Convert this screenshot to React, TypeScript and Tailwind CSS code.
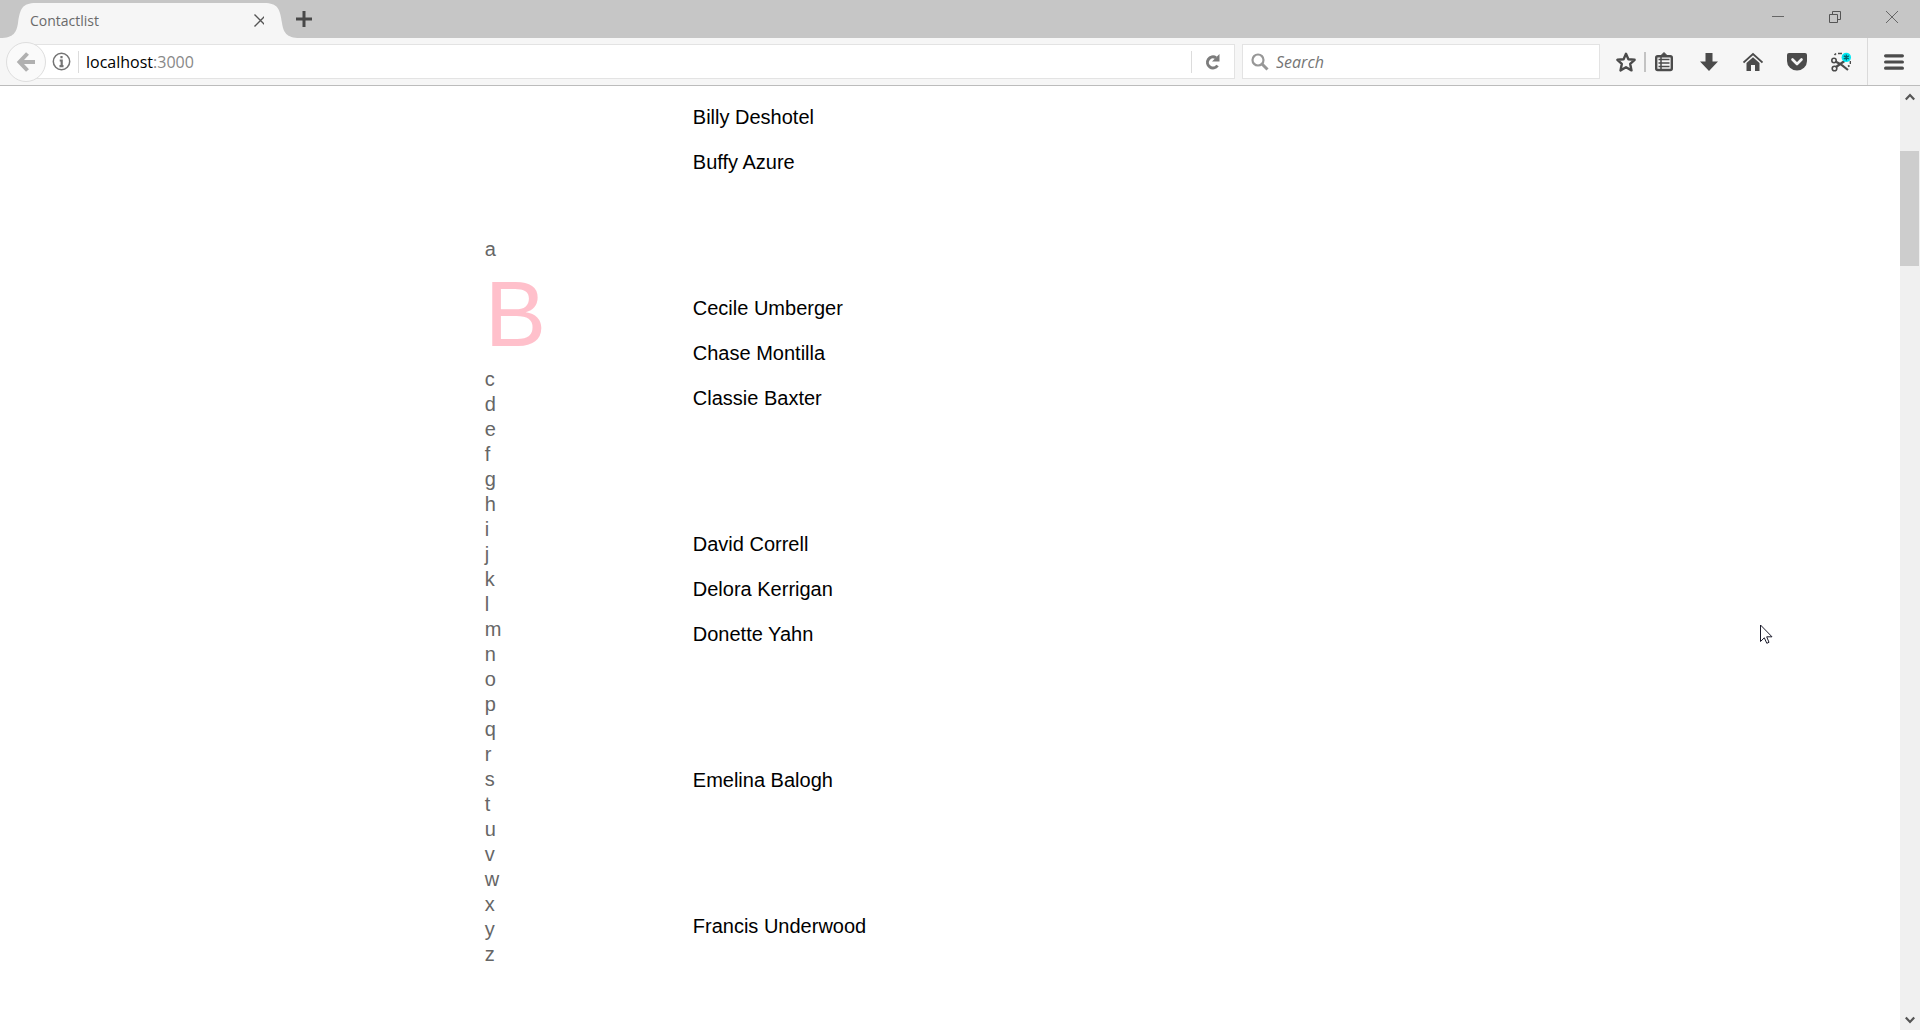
import React from "react";

const groups: string[][] = [
  ["Billy Deshotel", "Buffy Azure"],
  ["Cecile Umberger", "Chase Montilla", "Classie Baxter"],
  ["David Correll", "Delora Kerrigan", "Donette Yahn"],
  ["Emelina Balogh"],
  ["Francis Underwood"],
];

const letters = "abcdefghijklmnopqrstuvwxyz".split("");

function TabStrip() {
  return (
    <div className="flex h-[38px] items-stretch bg-[#c6c6c6]">
      <div className="flex items-end">
        <svg className="h-[38px] w-9" viewBox="0 0 36 38" aria-hidden="true">
          <path d="M0 38C14 38 16.500 32 18 23C20 9 22 3 36 3V38Z" fill="#f6f6f6" />
        </svg>
        <div className="flex h-[35px] w-[228px] items-center bg-[#f6f6f6]">
          <span className="-ml-[6px] text-[14px] leading-5 text-[#6a6a6a]">Contactlist</span>
          <button aria-label="Close tab" className="-mr-1 ml-auto">
            <svg className="size-[15px]" viewBox="0 0 15 15" stroke="#555" strokeWidth="1.4">
              <path d="M1.500 1.500L13.500 13.500M13.500 1.500L1.500 13.500" />
            </svg>
          </button>
        </div>
        <svg className="h-[38px] w-9" viewBox="0 0 36 38" aria-hidden="true">
          <path d="M36 38C22 38 19.500 32 18 23C16 9 14 3 0 3V38Z" fill="#f6f6f6" />
        </svg>
      </div>
      <button aria-label="New tab" className="-ml-1 flex items-center">
        <svg className="size-4" viewBox="0 0 16 16" stroke="#484848" strokeWidth="3">
          <path d="M8 0V16M0 8H16" />
        </svg>
      </button>
      <div className="ml-auto flex items-start gap-[43px] pr-[21px] pt-[10px]">
        <button aria-label="Minimize">
          <svg className="size-[14px]" viewBox="0 0 14 14" stroke="#666">
            <path d="M1 6.500H13" />
          </svg>
        </button>
        <button aria-label="Restore">
          <svg className="size-[14px]" viewBox="0 0 14 14" fill="none" stroke="#555">
            <path d="M1.500 4.500H9.500V12.500H1.500ZM4.500 4.500V1.500H12.500V9.500H9.500" />
          </svg>
        </button>
        <button aria-label="Close window">
          <svg className="size-[14px]" viewBox="0 0 14 14" stroke="#666">
            <path d="M1 1L13 13M13 1L1 13" />
          </svg>
        </button>
      </div>
    </div>
  );
}

function Toolbar() {
  return (
    <div className="flex h-12 items-center border-b border-[#bcbcbc] bg-[#f6f6f6] pl-[6px]">
      <button
        aria-label="Back"
        className="relative z-10 flex size-10 shrink-0 items-center justify-center rounded-full border border-[#dedede] bg-[#fafafa]"
      >
        <svg className="size-5" viewBox="0 0 20 20" fill="none" stroke="#b0b0b0" strokeWidth="4">
          <path d="M11.500 1.500L3.500 10L11.500 18.500M3.500 10H19" />
        </svg>
      </button>
      <div className="-ml-3 flex h-[35px] grow items-center border border-[#e3e3e3] bg-white pl-[17px]">
        <button aria-label="Site information" className="shrink-0">
          <svg className="size-[19px]" viewBox="0 0 19 19" fill="none" stroke="#737373">
            <circle cx="9.500" cy="9.500" r="8.200" strokeWidth="1.500" />
            <path d="M9.500 4V6.300M7.700 8.500H9.700V14M7.500 14.200H11.500" strokeWidth="2.200" />
          </svg>
        </button>
        <div className="ml-[7px] h-[22px] w-px bg-[#dcdcdc]" />
        <div className="relative ml-[7px] grow text-base leading-6">
          <input aria-label="Address" defaultValue="localhost:3000" className="w-full bg-transparent text-transparent caret-black outline-none" />
          <span aria-hidden="true" className="pointer-events-none absolute left-0 top-0 text-black">
            localhost<span className="text-[#888]">:3000</span>
          </span>
        </div>
        <div className="h-[22px] w-px bg-[#dcdcdc]" />
        <button aria-label="Reload" className="flex w-[42px] justify-center">
          <svg className="size-4" viewBox="0 0 16 16" fill="none">
            <path d="M12.500 11.500A5.500 5.500 0 1 1 11 3.800" stroke="#7c7c7c" strokeWidth="3" />
            <path d="M14.500 0V7.500H7Z" fill="#7c7c7c" />
          </svg>
        </button>
      </div>
      <div className="ml-[7px] flex h-[35px] w-[358px] shrink-0 items-center border border-[#e3e3e3] bg-white pl-2">
        <svg className="size-[18px] shrink-0" viewBox="0 0 18 18" fill="none" stroke="#979797" aria-hidden="true">
          <circle cx="7" cy="7" r="5.500" strokeWidth="2.200" />
          <path d="M11 11L16.500 16.500" strokeWidth="3" />
        </svg>
        <input
          aria-label="Search"
          placeholder="Search"
          className="ml-[7px] min-w-0 grow bg-transparent text-base italic leading-6 outline-none placeholder:text-[#757575]"
        />
      </div>
      <div className="ml-4 flex shrink-0 items-center text-[#4b4b4b]">
        <button aria-label="Bookmark this page">
          <svg className="size-5" viewBox="0 0 20 20" fill="none" stroke="currentColor" strokeWidth="2.400" strokeLinejoin="round">
            <path d="M10 1.800L12.400 7.200L18.600 7.800L14.200 11.900L15.500 18.400L10 15.200L4.500 18.400L5.800 11.900L1.400 7.800L7.600 7.200Z" />
          </svg>
        </button>
        <div className="ml-2 h-5 w-[2px] bg-[#c3c3c3]" />
        <button aria-label="Bookmarks list" className="ml-[9px]">
          <svg className="h-5 w-[18px]" viewBox="0 0 18 20" fill="none" stroke="currentColor">
            <path d="M9 .5L5 4.500H13Z" fill="currentColor" />
            <rect x="1.200" y="4.200" width="15.600" height="13.800" rx="1.500" strokeWidth="2.400" />
            <path d="M3.500 7.500H14.500M3.500 11H14.500M3.500 14.500H14.500M6 5V17" strokeWidth="1.500" />
          </svg>
        </button>
        <button aria-label="Downloads" className="ml-[27px]">
          <svg className="size-[18px]" viewBox="0 0 18 18" fill="currentColor">
            <path d="M5.500 0H12.500V8.500H18L9 18L0 8.500H5.500Z" />
          </svg>
        </button>
        <button aria-label="Home" className="ml-[25px]">
          <svg className="size-5" viewBox="0 0 20 20" fill="currentColor">
            <path d="M.5 10.500L10 2L19.500 10.500" fill="none" stroke="currentColor" strokeWidth="1.800" />
            <path d="M10 5.200L16.500 11V19H12V13H8V19H3.500V11Z" />
          </svg>
        </button>
        <button aria-label="Pocket" className="ml-[24px]">
          <svg className="size-5" viewBox="0 0 20 20">
            <path d="M2 1H18Q20 1 20 3V9A10 9.500 0 0 1 0 9V3Q0 1 2 1Z" fill="currentColor" />
            <path d="M5.500 7.500L10 12L14.500 7.500" fill="none" stroke="#f6f6f6" strokeWidth="2.600" strokeLinecap="round" strokeLinejoin="round" />
          </svg>
        </button>
        <button aria-label="Screen capture" className="ml-[24px]">
          <svg className="size-5" viewBox="0 0 20 20" fill="none" stroke="currentColor">
            <path d="M3.500 3L5 1.500M7 1.500H11M19.500 9V12M18.500 13.500L17 14.500" strokeWidth="1.700" />
            <circle cx="3" cy="8.500" r="2.200" strokeWidth="1.600" />
            <circle cx="3.500" cy="16.500" r="2.300" strokeWidth="1.600" />
            <path d="M4.500 9.500L10 12.500L17 18M5 15L13.500 9" strokeWidth="2.200" />
            <circle cx="15.300" cy="5.400" r="4.700" fill="#00e8f4" stroke="none" />
            <path d="M15.300 2.400V8.400M12.800 3.900L17.800 6.900M17.800 3.900L12.800 6.900" stroke="#07636c" strokeWidth="1.300" />
          </svg>
        </button>
        <div className="ml-4 h-[47px] w-px bg-[#dadada]" />
        <button aria-label="Menu" className="ml-4 mr-4">
          <svg className="size-5" viewBox="0 0 20 20" stroke="currentColor" strokeWidth="3.200" strokeLinecap="round">
            <path d="M1.600 3.800H18.400M1.600 10H18.400M1.600 16.200H18.400" />
          </svg>
        </button>
      </div>
    </div>
  );
}

function Scrollbar() {
  return (
    <div className="flex w-5 shrink-0 flex-col items-center bg-[#f0f0f0] text-[#555]">
      <svg className="mt-[6px] size-[10px]" viewBox="0 0 10 10" fill="none" stroke="currentColor" strokeWidth="2.200" aria-hidden="true">
        <path d="M.8 7.500L5 3L9.200 7.500" />
      </svg>
      <div className="mt-[49px] h-[115px] w-[19px] self-start bg-[#cdcdcd]" />
      <svg className="mb-[5px] mt-auto size-[10px]" viewBox="0 0 10 10" fill="none" stroke="currentColor" strokeWidth="2.200" aria-hidden="true">
        <path d="M.8 2.500L5 7L9.200 2.500" />
      </svg>
    </div>
  );
}

function Contacts() {
  return (
    <main className="flex grow overflow-hidden pl-[25.250%] font-['Liberation_Sans',Arial,sans-serif] text-xl">
      <nav aria-label="Alphabet" className="w-52 shrink-0 pt-[151px] leading-[25px] text-[#666]">
        <ul>
          {letters.map((letter) => (
            <li key={letter}>
              {letter === "b" ? (
                <a href="#b" className="block text-[92px] leading-[105px] text-[#ffc0cb]">B</a>
              ) : (
                <a href={"#" + letter} className="block">{letter}</a>
              )}
            </li>
          ))}
        </ul>
      </nav>
      <div className="flex flex-col gap-[101px] pt-[9px] leading-[45px] text-black">
        {groups.map((names) => (
          <ul key={names[0]}>
            {names.map((name) => (
              <li key={name}>{name}</li>
            ))}
          </ul>
        ))}
      </div>
    </main>
  );
}

export default function App() {
  return (
    <div className="relative flex h-screen flex-col overflow-hidden bg-white font-['Open_Sans','Noto_Sans',sans-serif]">
      <TabStrip />
      <Toolbar />
      <div className="flex min-h-0 grow">
        <Contacts />
        <Scrollbar />
      </div>
      <svg className="pointer-events-none absolute left-[1760px] top-[624px] h-[21px] w-[13px]" viewBox="0 0 13 21" aria-hidden="true">
        <path d="M.5 1V17.500L4.300 13.800L6.800 19.300L9 18.300L6.700 12.800H12Z" fill="#fff" stroke="#1a1a2a" />
      </svg>
    </div>
  );
}
